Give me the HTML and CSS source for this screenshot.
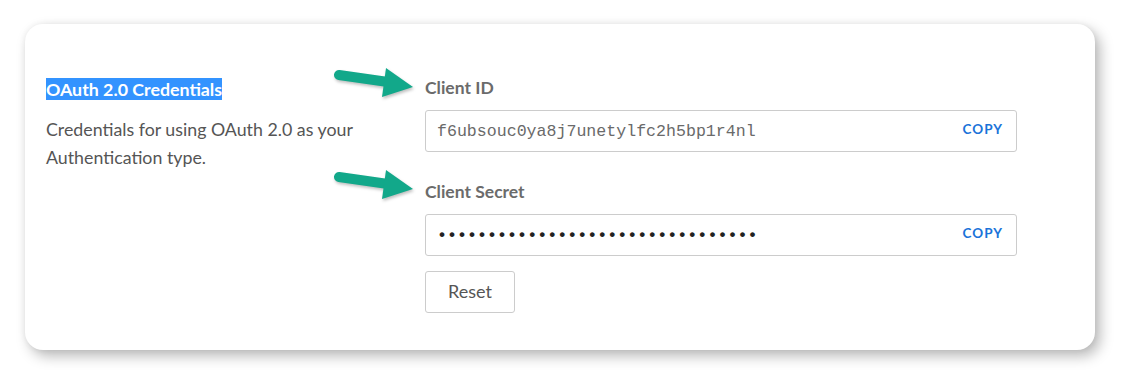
FILE: index.html
```html
<!DOCTYPE html>
<html>
<head>
<meta charset="utf-8">
<link rel="stylesheet" href="styles.css">
</head>
<body>
<div class="card">
  <div class="info">
    <h2 class="title"><span class="sel">OAuth 2.0 Credentials</span></h2>
    <p class="desc">Credentials for using OAuth 2.0 as your Authentication type.</p>
  </div>
  <div class="fields">
    <label class="label">Client ID</label>
    <div class="field">
      <span class="value">f6ubsouc0ya8j7unetylfc2h5bp1r4nl</span>
      <button class="copy">COPY</button>
    </div>
    <label class="label label-second">Client Secret</label>
    <div class="field">
      <span class="value secret">••••••••••••••••••••••••••••••••</span>
      <button class="copy">COPY</button>
    </div>
    <button class="reset">Reset</button>
  </div>
  <svg class="arrow arrow-1" width="90" height="45" viewBox="0 0 90 45">
    <line x1="9" y1="13" x2="58" y2="20" stroke="#12a88a" stroke-width="10" stroke-linecap="round"/>
    <polygon points="56,6 83,25 52,35" fill="#12a88a"/>
  </svg>
  <svg class="arrow arrow-2" width="90" height="45" viewBox="0 0 90 45">
    <line x1="9" y1="13" x2="58" y2="20" stroke="#12a88a" stroke-width="10" stroke-linecap="round"/>
    <polygon points="56,6 83,25 52,35" fill="#12a88a"/>
  </svg>
</div>
</body>
</html>
```
FILE: styles.css
```css
html, body {
  margin: 0;
  padding: 0;
  background: #ffffff;
}
body {
  padding: 24px 0 34px 25px;
  font-family: Lato, "Liberation Sans", sans-serif;
}
.card {
  position: relative;
  box-sizing: border-box;
  width: 1070px;
  height: 326px;
  background: #ffffff;
  border-radius: 18px;
  box-shadow: 5px 6px 14px rgba(0, 0, 0, 0.28), 0 0 6px rgba(0, 0, 0, 0.06);
  display: flex;
  padding: 53px 0 0 21px;
}
.info {
  width: 379px;
  flex: none;
}
.title {
  margin: 0;
  font-size: 17.8px;
  font-weight: 700;
  line-height: 24px;
}
.sel {
  background: #3393ff;
  color: #ffffff;
  padding: 0;
}
.desc {
  margin: 14px 0 0;
  width: 340px;
  font-size: 17.8px;
  line-height: 28px;
  color: #555555;
}
.fields {
  width: 592px;
  display: flex;
  flex-direction: column;
  align-items: flex-start;
}
.label {
  font-size: 17.5px;
  font-weight: 700;
  color: #6b6b6b;
  line-height: 22px;
  margin-top: 0;
  margin-bottom: 11px;
}
.label-second {
  margin-top: 29px;
}
.field {
  box-sizing: border-box;
  width: 592px;
  height: 42px;
  border: 1px solid #cccccc;
  border-radius: 3px;
  display: flex;
  align-items: center;
  justify-content: space-between;
  padding: 0 13px 0 11px;
}
.value {
  font-family: "Liberation Mono", "Courier New", monospace;
  font-size: 16.6px;
  color: #6a6a6a;
}
.secret {
  color: #222222;
  font-size: 16.7px;
  font-weight: 700;
}
.copy {
  border: none;
  background: none;
  padding: 0;
  font-family: Lato, "Liberation Sans", sans-serif;
  font-size: 13.5px;
  font-weight: 700;
  letter-spacing: 1px;
  color: #1a73d9;
  margin-top: -4px;
}
.reset {
  margin-top: 15px;
  box-sizing: border-box;
  width: 90px;
  height: 42px;
  border: 1px solid #cccccc;
  border-radius: 3px;
  background: #ffffff;
  font-family: Lato, "Liberation Sans", sans-serif;
  font-size: 18px;
  color: #555555;
  padding: 0 0 3px;
}
.arrow {
  position: absolute;
  filter: drop-shadow(1px 2px 1.5px rgba(0, 0, 0, 0.25));
}
.arrow-1 {
  left: 305px;
  top: 38px;
}
.arrow-2 {
  left: 305px;
  top: 140px;
}
```
